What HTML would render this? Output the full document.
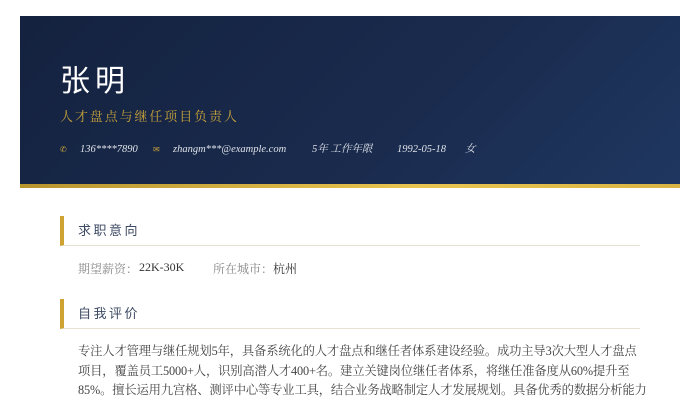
<!DOCTYPE html>
<html><head><meta charset="utf-8"><style>
*{margin:0;padding:0;box-sizing:border-box}
body{width:700px;height:400px;overflow:hidden;background:#fff;font-family:"Liberation Serif","Noto Serif CJK SC",serif;}
.hd{position:absolute;left:20px;top:16px;width:660px;height:168px;background:linear-gradient(135deg,#14223f 0%,#1a2b4e 60%,#1f3760 100%);}
.gold{position:absolute;left:20px;top:184px;width:660px;height:4px;background:linear-gradient(90deg,#b8942e,#e8c550 60%,#d9b445);}
.name{position:absolute;color:#fff;font-size:30px;letter-spacing:5px;line-height:36px;font-family:"Noto Sans CJK SC",sans-serif;font-weight:400}
.title{position:absolute;color:#c9a33a;font-size:13px;letter-spacing:1.9px;line-height:18px}
.ct{position:absolute;color:#dfe3ea;font-size:10.5px;font-style:italic;line-height:14px;white-space:nowrap}
.ic{color:#c9a33a;font-size:8px;font-style:normal}
.sec{position:absolute;left:60px;width:580px;height:30px;border-left:4px solid #cfa332;border-bottom:1px solid #e8e0d2}
.sec span{position:absolute;left:14px;top:4px;font-size:13px;letter-spacing:2.5px;color:#3d4a63;font-family:"Noto Sans CJK SC",sans-serif;font-weight:400}
.row{position:absolute;top:260px;font-size:12px;color:#333;white-space:nowrap}
.lab{color:#888}
.p{position:absolute;left:78px;top:342px;width:600px;font-size:12.3px;line-height:19.5px;color:#444;white-space:nowrap;letter-spacing:-0.15px}
</style></head><body>
<div class="hd"></div><div class="gold"></div>
<div class="name" style="left:60px;top:60px">张明</div>
<div class="title" style="left:60px;top:108px">人才盘点与继任项目负责人</div>
<div class="ct" style="left:60px;top:143px"><span class="ic">✆</span></div>
<div class="ct" style="left:80px;top:143px">136****7890</div>
<div class="ct" style="left:153px;top:143px"><span class="ic">✉</span></div>
<div class="ct" style="left:173px;top:143px">zhangm***@example.com</div>
<div class="ct" style="left:312px;top:143px">5年 工作年限</div>
<div class="ct" style="left:397px;top:143px">1992-05-18</div>
<div class="ct" style="left:465px;top:143px">女</div>
<div class="sec" style="top:216px"><span>求职意向</span></div>
<div class="row lab" style="left:78px">期望薪资：</div>
<div class="row" style="left:139px">22K-30K</div>
<div class="row lab" style="left:213px">所在城市：</div>
<div class="row" style="left:273px">杭州</div>
<div class="sec" style="top:299px"><span>自我评价</span></div>
<div class="p">专注人才管理与继任规划5年，具备系统化的人才盘点和继任者体系建设经验。成功主导3次大型人才盘点<br>项目，覆盖员工5000+人，识别高潜人才400+名。建立关键岗位继任者体系，将继任准备度从60%提升至<br>85%。擅长运用九宫格、测评中心等专业工具，结合业务战略制定人才发展规划。具备优秀的数据分析能力</div>
</body></html>
